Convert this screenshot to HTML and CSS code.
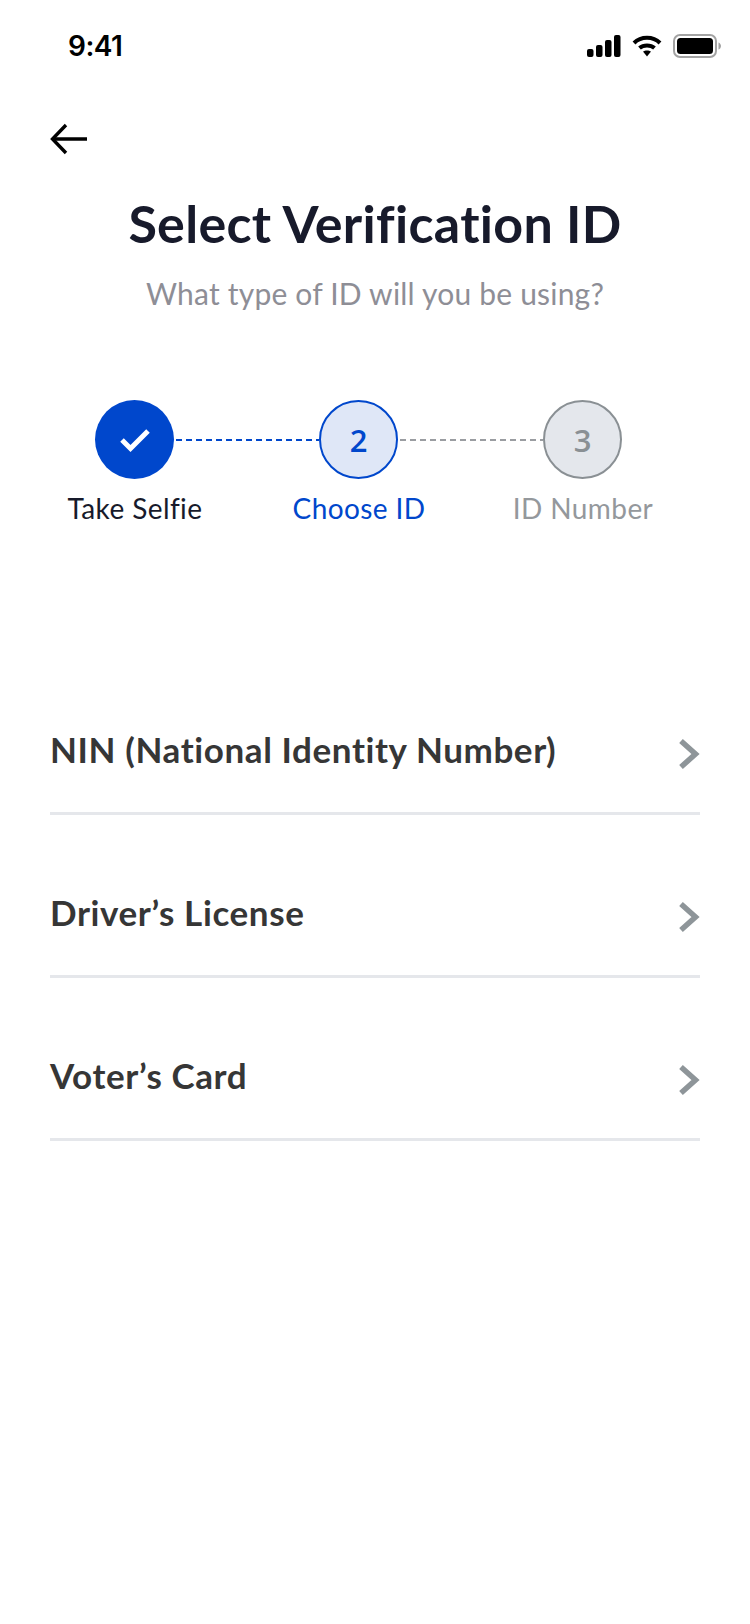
FILE: index.html
```html
<!DOCTYPE html>
<html lang="en">
  <head>
    <meta charset="UTF-8" />
    <meta name="viewport" content="width=device-width, initial-scale=1.0" />
    <title>Select Verification ID</title>
    <link rel="stylesheet" href="styles.css">
  </head>
  <body>
    <div class="status-bar">
      <span class="time">9:41</span>
      <div class="status-icons">
        <svg width="34" height="22" viewBox="0 0 34 22" fill="#000">
          <rect x="0" y="14" width="6.5" height="8" rx="2" />
          <rect x="9" y="10" width="6.5" height="12" rx="2" />
          <rect x="18" y="5" width="6.5" height="17" rx="2" />
          <rect x="27" y="0" width="6.5" height="22" rx="2" />
        </svg>
        <svg width="30" height="22" viewBox="0 0 30 22" fill="none" stroke="#000" stroke-width="4">
          <path d="M2 8 C9 1 21 1 28 8" />
          <path d="M7.500 13 C11.500 9.500 18.500 9.500 22.500 13" />
          <path d="M11 16.500 L15 21.500 L19 16.500 C17 15 13 15 11 16.500 Z" fill="#000" stroke="none" />
        </svg>
        <svg width="48" height="24" viewBox="0 0 48 24">
          <rect x="1" y="1" width="42" height="22" rx="6" fill="none" stroke="#a3a3a3" stroke-width="2" />
          <rect x="4" y="4" width="36" height="16" rx="3.500" fill="#000" />
          <path d="M45.500 8.500 C47 9 48 10.500 48 12 C48 13.500 47 15 45.500 15.500 Z" fill="#a3a3a3" />
        </svg>
      </div>
    </div>

    <div class="back">
      <svg width="38" height="32" viewBox="0 0 38 32" fill="none" stroke="#000" stroke-width="3.400">
        <path d="M37 16 H3" />
        <path d="M16 2 L2.500 16 L16 30" />
      </svg>
    </div>

    <h1>Select Verification ID</h1>
    <p class="subtitle">What type of ID will you be using?</p>

    <div class="steps">
      <div class="circle done">
        <svg width="32" height="26" viewBox="0 0 32 26" fill="none" stroke="#fff" stroke-width="5">
          <path d="M3 13 L11.500 21.500 L29 4" />
        </svg>
      </div>
      <div class="link link-blue"></div>
      <div class="circle current">2</div>
      <div class="link link-grey"></div>
      <div class="circle todo">3</div>
    </div>
    <div class="step-labels">
      <span class="label-done">Take Selfie</span>
      <span class="label-current">Choose ID</span>
      <span class="label-todo">ID Number</span>
    </div>

    <div class="id-list">
      <div class="id-row">
        <span class="id-name">NIN (National Identity Number)</span>
        <svg class="chevron" width="22" height="32" viewBox="0 0 22 32" fill="none" stroke="#8e9599" stroke-width="5.500">
          <path d="M3 3 L17.500 16 L3 29" />
        </svg>
      </div>
      <div class="id-row">
        <span class="id-name">Driver’s License</span>
        <svg class="chevron" width="22" height="32" viewBox="0 0 22 32" fill="none" stroke="#8e9599" stroke-width="5.500">
          <path d="M3 3 L17.500 16 L3 29" />
        </svg>
      </div>
      <div class="id-row">
        <span class="id-name">Voter’s Card</span>
        <svg class="chevron" width="22" height="32" viewBox="0 0 22 32" fill="none" stroke="#8e9599" stroke-width="5.500">
          <path d="M3 3 L17.500 16 L3 29" />
        </svg>
      </div>
    </div>
  </body>
</html>
```

FILE: styles.css
```css
body {
  font-family: Lato, "Open Sans", sans-serif;
  font-variant-ligatures: none;
  margin: 0;
  padding: 0;
  background-color: #fff;
  height: 1624px;
  overflow: hidden;
}

.status-bar {
  display: flex;
  justify-content: space-between;
  align-items: center;
  height: 24px;
  padding: 34px 29px 0 68px;
}

.time {
  font-family: Inter, sans-serif;
  font-size: 28px;
  font-weight: 600;
  letter-spacing: -0.5px;
  color: #000;
}

.status-icons {
  display: flex;
  align-items: center;
  gap: 11px;
}

.status-icons svg {
  display: block;
}

.back {
  margin: 65px 0 0 50px;
  height: 32px;
}

.back svg {
  display: block;
}

h1 {
  margin: 38px 0 0;
  font-size: 52px;
  line-height: 60px;
  font-weight: 700;
  letter-spacing: 0.3px;
  text-align: center;
  color: #171a2b;
}

.subtitle {
  margin: 22px 0 0;
  font-size: 30px;
  line-height: 36px;
  letter-spacing: 0.2px;
  text-align: center;
  color: #8e8e96;
}

.steps {
  display: flex;
  align-items: center;
  margin: 89px 0 0 95px;
  width: 527px;
}

.circle {
  display: flex;
  align-items: center;
  justify-content: center;
  flex: none;
  box-sizing: border-box;
  width: 79px;
  height: 79px;
  border-radius: 50%;
  font-family: "Open Sans", sans-serif;
  font-size: 31px;
  font-weight: 600;
}

.done {
  background-color: #0047cc;
}

.current {
  background-color: #dfe7f7;
  border: 2px solid #0047cc;
  color: #0047cc;
}

.todo {
  background-color: #e4e7ec;
  border: 2px solid #8a9094;
  color: #8a9094;
}

.link {
  flex: 1;
  height: 2px;
  margin: 0 0 0 2px;
}

.link-blue {
  background: repeating-linear-gradient(90deg, #0047cc 0 6px, transparent 6px 10px);
}

.link-grey {
  background: repeating-linear-gradient(90deg, #9a9da1 0 6px, transparent 6px 10px);
}

.step-labels {
  display: grid;
  grid-template-columns: repeat(3, 224px);
  margin: 11px 0 0 23px;
  font-size: 28px;
  line-height: 36px;
  letter-spacing: 0.4px;
  text-align: center;
}

.label-done {
  color: #171a2b;
}

.label-current {
  color: #0047cc;
}

.label-todo {
  color: #94989c;
}

.id-list {
  margin: 126px 50px 0;
}

.id-row {
  display: flex;
  justify-content: space-between;
  align-items: center;
  box-sizing: border-box;
  height: 163px;
  padding-top: 44px;
  border-bottom: 3px solid #e5e7eb;
}

.id-name {
  margin-bottom: 10px;
  font-size: 35px;
  font-weight: 700;
  letter-spacing: 0.6px;
  color: #363636;
}

.chevron {
  display: block;
}
```
